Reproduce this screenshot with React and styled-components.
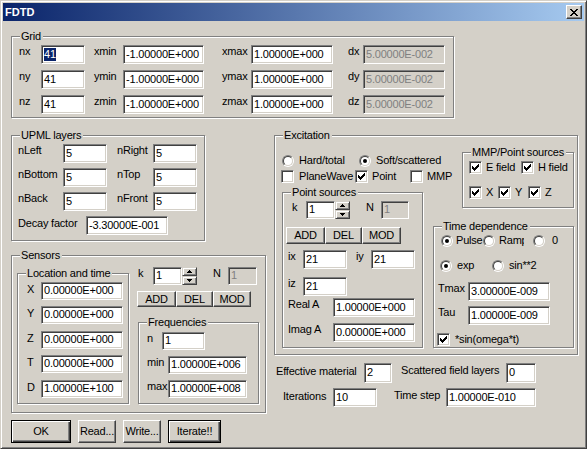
import React from 'react';
import styled, { createGlobalStyle } from 'styled-components';

const FACE = '#d4d0c8';

const GlobalStyle = createGlobalStyle`
  html, body { margin: 0; padding: 0; background: ${FACE}; }
  body {
    font-family: "Liberation Sans", Arial, sans-serif;
    font-size: 11px;
    letter-spacing: -0.2px;
    color: #000;
  }
`;

const pix = (spans) => spans.map(([x, y, w]) => `M${x} ${y}h${w}v1h-${w}z`).join('');
const CHECK = pix([[6,0,1],[5,1,2],[0,2,1],[4,2,3],[0,3,2],[3,3,3],[0,4,5],[1,5,3],[2,6,1]]);
const CLOSE = pix([[0,0,2],[6,0,2],[1,1,2],[5,1,2],[2,2,4],[3,3,2],[2,4,4],[1,5,2],[5,5,2],[0,6,2],[6,6,2]]);
const UP = pix([[2,0,1],[1,1,3],[0,2,5]]);
const DOWN = pix([[0,0,5],[1,1,3],[2,2,1]]);

const Svg = styled.svg`display: block; flex: none;`;
const Glyph = ({ d, w, h }) => (
  <Svg width={w} height={h} viewBox={`0 0 ${w} ${h}`} shapeRendering="crispEdges">
    <path d={d} fill="#000" />
  </Svg>
);

const Window = styled.div`
  box-sizing: border-box;
  width: 587px;
  height: 449px;
  border: 1px solid;
  border-color: ${FACE} #404040 #404040 ${FACE};
  box-shadow: inset 1px 1px #fff, inset -1px -1px #808080;
  padding: 2px;
  background: ${FACE};
  display: flex;
  flex-direction: column;
  overflow: hidden;
`;

const TitleBar = styled.div`
  flex: none;
  height: 18px;
  display: flex;
  align-items: center;
  padding-left: 2px;
  background: linear-gradient(to right, #0a246a, #a6caf0);
`;

const TitleText = styled.span`
  flex: 1;
  color: #fff;
  font-weight: bold;
  letter-spacing: 0;
  line-height: 18px;
`;

const CloseBtn = styled.div`
  box-sizing: border-box;
  width: 16px;
  height: 14px;
  margin-right: 2px;
  background: ${FACE};
  border: 1px solid;
  border-color: #fff #404040 #404040 #fff;
  box-shadow: inset -1px -1px #808080;
  display: flex;
  align-items: center;
  justify-content: center;
`;

const Body = styled.div`
  display: flex;
  flex-direction: column;
  align-items: flex-start;
  padding-left: 8px;
`;

const Row = styled.div`
  flex: none;
  display: flex;
  align-items: ${p => (p.$center ? 'center' : 'flex-start')};
  margin-top: ${p => p.$mt || 0}px;
  margin-left: ${p => p.$ml || 0}px;
`;

const Col = styled.div`
  flex: none;
  display: flex;
  flex-direction: column;
  align-items: flex-start;
  width: ${p => (p.$w ? `${p.$w}px` : 'auto')};
  margin-top: ${p => p.$mt || 0}px;
  margin-left: ${p => p.$ml || 0}px;
`;

const Group = styled.div`
  position: relative;
  flex: none;
  box-sizing: border-box;
  display: flex;
  flex-direction: ${p => (p.$row ? 'row' : 'column')};
  align-items: flex-start;
  width: ${p => p.$w}px;
  height: ${p => p.$h}px;
  margin-top: ${p => p.$mt || 0}px;
  margin-left: ${p => p.$ml || 0}px;
  border: 1px solid #808080;
  box-shadow: inset 1px 1px #fff, 1px 1px #fff;
`;

const Legend = styled.span`
  position: absolute;
  top: -7px;
  left: 8px;
  padding: 0 2px 0 1px;
  background: ${FACE};
  line-height: 13px;
  white-space: nowrap;
`;

const Lbl = styled.span`
  flex: none;
  display: block;
  box-sizing: border-box;
  width: ${p => (p.$w ? `${p.$w}px` : 'auto')};
  margin-left: ${p => p.$ml || 0}px;
  padding-top: ${p => p.$pt || 0}px;
  line-height: 13px;
  white-space: nowrap;
`;

const Edit = styled.div`
  flex: none;
  box-sizing: border-box;
  width: ${p => p.$w}px;
  height: ${p => p.$h || 19}px;
  margin-left: ${p => p.$ml || 0}px;
  border: 1px solid;
  border-color: #808080 #fff #fff #808080;
  box-shadow: inset 1px 1px #404040, inset -1px -1px ${FACE};
  background: ${p => (p.$off ? FACE : '#fff')};
  color: ${p => (p.$off ? '#808080' : '#000')};
  padding: 0 2px 1px 2px;
  display: flex;
  align-items: center;
  overflow: hidden;
  white-space: nowrap;
  line-height: 13px;
`;

const Sel = styled.span`
  background: #0a246a;
  color: #fff;
`;

const Btn = styled.div`
  flex: none;
  box-sizing: border-box;
  width: ${p => p.$w}px;
  height: ${p => p.$h}px;
  margin-left: ${p => p.$ml || 0}px;
  display: flex;
  align-items: center;
  justify-content: center;
  background: ${FACE};
  line-height: 13px;
  border: 1px solid;
  border-color: ${p => (p.$def ? '#000' : '#fff #404040 #404040 #fff')};
  box-shadow: ${p =>
    p.$def
      ? 'inset 1px 1px #fff, inset -1px -1px #404040, inset -2px -2px #808080'
      : 'inset -1px -1px #808080'};
`;

const Opt = styled.div`
  flex: none;
  display: flex;
  align-items: center;
  height: 13px;
  width: ${p => (p.$w ? `${p.$w}px` : 'auto')};
  white-space: nowrap;
`;

const OptText = styled.span`
  flex: none;
  margin-left: ${p => (p.$gap == null ? 4 : p.$gap)}px;
  line-height: 13px;
  ${p => (p.$clip ? `width: ${p.$clip}px; overflow: hidden;` : '')}
`;

const CheckBox = styled.span`
  flex: none;
  box-sizing: border-box;
  width: 13px;
  height: 13px;
  background: #fff;
  border: 1px solid;
  border-color: #808080 #fff #fff #808080;
  box-shadow: inset 1px 1px #404040, inset -1px -1px ${FACE};
  display: flex;
  align-items: center;
  justify-content: center;
`;

const RadioCircle = styled.span`
  flex: none;
  position: relative;
  box-sizing: border-box;
  width: 12px;
  height: 12px;
  border-radius: 50%;
  border: 1px solid;
  border-color: #808080 #fff #fff #808080;
  display: flex;
  align-items: center;
  justify-content: center;
  &::before {
    content: '';
    box-sizing: border-box;
    width: 10px;
    height: 10px;
    border-radius: 50%;
    border: 1px solid;
    border-color: #404040 ${FACE} ${FACE} #404040;
    background: #fff;
  }
  &::after {
    content: '';
    display: ${p => (p.$on ? 'block' : 'none')};
    position: absolute;
    left: 3px;
    top: 3px;
    width: 4px;
    height: 4px;
    border-radius: 50%;
    background: #000;
  }
`;

const Spin = styled.div`
  flex: none;
  display: flex;
  flex-direction: column;
  width: 15px;
  height: 18px;
`;

const SpinBtn = styled.div`
  flex: 1;
  box-sizing: border-box;
  background: ${FACE};
  border: 1px solid;
  border-color: ${FACE} #404040 #404040 ${FACE};
  box-shadow: inset 1px 1px #fff, inset -1px -1px #808080;
  display: flex;
  align-items: center;
  justify-content: center;
`;

const Radio = ({ on, w, clip, gap, children }) => (
  <Opt $w={w}>
    <RadioCircle $on={on} />
    <OptText $gap={gap == null ? 5 : gap} $clip={clip}>{children}</OptText>
  </Opt>
);

const Check = ({ on, w, gap, children }) => (
  <Opt $w={w}>
    <CheckBox>{on && <Glyph d={CHECK} w={7} h={7} />}</CheckBox>
    <OptText $gap={gap}>{children}</OptText>
  </Opt>
);

const Spinner = () => (
  <Spin>
    <SpinBtn><Glyph d={UP} w={5} h={3} /></SpinBtn>
    <SpinBtn><Glyph d={DOWN} w={5} h={3} /></SpinBtn>
  </Spin>
);

const gridRows = [
  ['nx', '41', 'xmin', '-1.00000E+000', 'xmax', '1.00000E+000', 'dx', '5.00000E-002'],
  ['ny', '41', 'ymin', '-1.00000E+000', 'ymax', '1.00000E+000', 'dy', '5.00000E-002'],
  ['nz', '41', 'zmin', '-1.00000E+000', 'zmax', '1.00000E+000', 'dz', '5.00000E-002'],
];

const upmlRows = [
  ['nLeft', 'nRight'],
  ['nBottom', 'nTop'],
  ['nBack', 'nFront'],
];

const locRows = [
  ['X', '0.00000E+000', 8],
  ['Y', '0.00000E+000', 6],
  ['Z', '0.00000E+000', 7],
  ['T', '0.00000E+000', 6],
  ['D', '1.00000E+100', 7],
];

export default function App() {
  return (
    <>
      <GlobalStyle />
      <Window>
        <TitleBar>
          <TitleText>FDTD</TitleText>
          <CloseBtn><Glyph d={CLOSE} w={8} h={7} /></CloseBtn>
        </TitleBar>
        <Body>
          <Group $w={443} $h={82} $mt={15}>
            <Legend>Grid</Legend>
            {gridRows.map((r, i) => (
              <Row key={r[0]} $mt={i === 0 ? 8 : 6} $ml={7}>
                <Lbl $w={22}>{r[0]}</Lbl>
                <Edit $w={44}>{i === 0 ? <Sel>{r[1]}</Sel> : r[1]}</Edit>
                <Lbl $ml={9} $w={29}>{r[2]}</Lbl>
                <Edit $w={81}>{r[3]}</Edit>
                <Lbl $ml={18} $w={29}>{r[4]}</Lbl>
                <Edit $w={82}>{r[5]}</Edit>
                <Lbl $ml={15} $w={15}>{r[6]}</Lbl>
                <Edit $w={82} $off>{r[7]}</Edit>
              </Row>
            ))}
          </Group>

          <Row $mt={17}>
            <Col $w={255}>
              <Group $w={194} $h={106}>
                <Legend>UPML layers</Legend>
                {upmlRows.map((r, i) => (
                  <Row key={r[0]} $mt={i === 0 ? 8 : 5} $ml={6}>
                    <Lbl $w={45}>{r[0]}</Lbl>
                    <Edit $w={44}>5</Edit>
                    <Lbl $ml={10} $w={36}>{r[1]}</Lbl>
                    <Edit $w={44}>5</Edit>
                  </Row>
                ))}
                <Row $mt={5} $ml={6}>
                  <Lbl $w={68} $pt={1}>Decay factor</Lbl>
                  <Edit $w={82}>-3.30000E-001</Edit>
                </Row>
              </Group>

              <Group $w={255} $h={158} $mt={14} $row>
                <Legend>Sensors</Legend>
                <Group $w={112} $h={131} $mt={17} $ml={5}>
                  <Legend>Location and time</Legend>
                  {locRows.map(r => (
                    <Row key={r[0]} $mt={r[2]} $ml={9}>
                      <Lbl $w={14} $pt={1}>{r[0]}</Lbl>
                      <Edit $w={82} $h={18}>{r[1]}</Edit>
                    </Row>
                  ))}
                </Group>
                <Col $mt={11} $ml={8}>
                  <Row $ml={1}>
                    <Lbl $w={15}>k</Lbl>
                    <Edit $w={29} $h={18}>1</Edit>
                    <Spinner />
                    <Lbl $ml={16} $w={15}>N</Lbl>
                    <Edit $w={29} $h={18} $off>1</Edit>
                  </Row>
                  <Row $mt={6}>
                    <Btn $w={39} $h={16}>ADD</Btn>
                    <Btn $w={37} $h={16}>DEL</Btn>
                    <Btn $w={38} $h={16}>MOD</Btn>
                  </Row>
                  <Group $w={121} $h={82} $mt={15} $ml={1}>
                    <Legend>Frequencies</Legend>
                    <Row $mt={9} $ml={8}>
                      <Lbl $w={15}>n</Lbl>
                      <Edit $w={43} $h={18}>1</Edit>
                    </Row>
                    <Row $mt={6} $ml={8}>
                      <Lbl $w={21}>min</Lbl>
                      <Edit $w={79} $h={18}>1.00000E+006</Edit>
                    </Row>
                    <Row $mt={6} $ml={8}>
                      <Lbl $w={21}>max</Lbl>
                      <Edit $w={79} $h={18}>1.00000E+008</Edit>
                    </Row>
                  </Group>
                </Col>
              </Group>
            </Col>

            <Col $ml={8}>
              <Group $w={304} $h={220} $row>
                <Legend>Excitation</Legend>
                <Col $w={142} $ml={6}>
                  <Row $mt={18} $ml={1}>
                    <Radio w={77}>Hard/total</Radio>
                    <Radio on>Soft/scattered</Radio>
                  </Row>
                  <Row $mt={3}>
                    <Check w={74} gap={5}>PlaneWave</Check>
                    <Check w={55} on>Point</Check>
                    <Check>MMP</Check>
                  </Row>
                  <Group $w={141} $h={156} $mt={9} $ml={1}>
                    <Legend>Point sources</Legend>
                    <Row $mt={8} $ml={9}>
                      <Lbl $w={14}>k</Lbl>
                      <Edit $w={29} $h={18}>1</Edit>
                      <Spinner />
                      <Lbl $ml={16} $w={15}>N</Lbl>
                      <Edit $w={28} $h={18} $off>1</Edit>
                    </Row>
                    <Row $mt={8} $ml={3}>
                      <Btn $w={39} $h={17}>ADD</Btn>
                      <Btn $w={37} $h={17}>DEL</Btn>
                      <Btn $w={39} $h={17}>MOD</Btn>
                    </Row>
                    <Row $mt={6} $ml={5}>
                      <Lbl $w={15}>ix</Lbl>
                      <Edit $w={44}>21</Edit>
                      <Lbl $ml={9} $w={15}>iy</Lbl>
                      <Edit $w={44}>21</Edit>
                    </Row>
                    <Row $mt={8} $ml={5}>
                      <Lbl $w={15}>iz</Lbl>
                      <Edit $w={44}>21</Edit>
                    </Row>
                    <Row $mt={2} $ml={5}>
                      <Lbl $w={45}>Real A</Lbl>
                      <Edit $w={82}>1.00000E+000</Edit>
                    </Row>
                    <Row $mt={6} $ml={5}>
                      <Lbl $w={45}>Imag A</Lbl>
                      <Edit $w={82}>0.00000E+000</Edit>
                    </Row>
                  </Group>
                </Col>
                <Col $ml={10}>
                  <Group $w={112} $h={56} $mt={16} $ml={29}>
                    <Legend>MMP/Point sources</Legend>
                    <Row $mt={8} $ml={6}>
                      <Check w={52} on>E field</Check>
                      <Check on>H field</Check>
                    </Row>
                    <Row $mt={12} $ml={6}>
                      <Check w={29} on>X</Check>
                      <Check w={30} on>Y</Check>
                      <Check on>Z</Check>
                    </Row>
                  </Group>
                  <Group $w={141} $h={122} $mt={18}>
                    <Legend>Time dependence</Legend>
                    <Row $mt={7} $ml={7}>
                      <Radio w={42} on gap={3}>Pulse</Radio>
                      <Radio w={50} gap={4} clip={25}>Ramp</Radio>
                      <Radio gap={7}>0</Radio>
                    </Row>
                    <Row $mt={12} $ml={6}>
                      <Radio w={52} on>exp</Radio>
                      <Radio>sin**2</Radio>
                    </Row>
                    <Row $mt={10} $ml={4}>
                      <Lbl $w={30}>Tmax</Lbl>
                      <Edit $w={82}>3.00000E-009</Edit>
                    </Row>
                    <Row $mt={5} $ml={4}>
                      <Lbl $w={30}>Tau</Lbl>
                      <Edit $w={82}>1.00000E-009</Edit>
                    </Row>
                    <Row $mt={8} $ml={3}>
                      <Check on gap={5}>*sin(omega*t)</Check>
                    </Row>
                  </Group>
                </Col>
              </Group>

              <Row $mt={8} $ml={2}>
                <Lbl $w={88} $pt={2}>Effective material</Lbl>
                <Edit $w={28} $h={20}>2</Edit>
                <Lbl $ml={9} $w={105} $pt={1}>Scattered field layers</Lbl>
                <Edit $w={30} $h={20}>0</Edit>
              </Row>
              <Row $mt={5} $ml={9}>
                <Lbl $w={50} $pt={2}>Iterations</Lbl>
                <Edit $w={44}>10</Edit>
                <Lbl $ml={17} $w={52} $pt={1}>Time step</Lbl>
                <Edit $w={90}>1.00000E-010</Edit>
              </Row>
            </Col>
          </Row>

          <Row $mt={7}>
            <Btn $w={60} $h={23} $def>OK</Btn>
            <Btn $w={38} $h={23} $ml={7}>Read...</Btn>
            <Btn $w={38} $h={23} $ml={7}>Write...</Btn>
            <Btn $w={53} $h={23} $ml={7} $def>Iterate!!</Btn>
          </Row>
        </Body>
      </Window>
    </>
  );
}
